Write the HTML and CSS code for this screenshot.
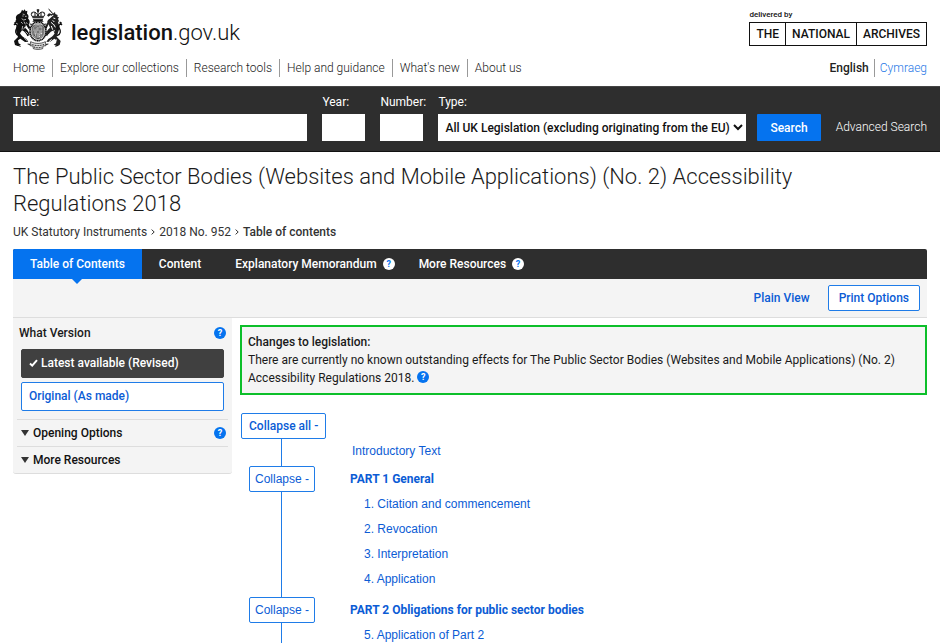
FILE: index.html
```html
<!DOCTYPE html>
<html lang="en">
<head>
  <meta charset="UTF-8">
  <meta name="viewport" content="width=device-width, initial-scale=1.0">
  <title>The Public Sector Bodies (Websites and Mobile Applications) (No. 2) Accessibility Regulations 2018</title>
  <link rel="stylesheet" href="styles.css">
</head>
<body>

  <header class="site-header">
    <div class="brand-row">
      <a class="brand" href="#">
        <svg class="crest" viewBox="0 0 150 126" aria-hidden="true">
          <!-- crown -->
          <g fill="none" stroke="#111" stroke-width="3">
            <path d="M57 25c-6-9 2-15 9-12 4 2 7 5 9 11 2-6 5-9 9-11 7-3 15 3 9 12z"/>
            <path d="M75 3v21M71 6h8M58 29h34M60 34h30M66 13v11M84 13v11"/>
          </g>
          <g fill="#111">
            <circle cx="57" cy="15" r="2"/><circle cx="93" cy="15" r="2"/><circle cx="75" cy="9" r="3"/>
            <path d="M62 36h26l4 5H58z"/>
          </g>
          <!-- garter and shield -->
          <ellipse cx="75" cy="70" rx="24" ry="28" fill="#fff" stroke="#111" stroke-width="5" stroke-dasharray="4 1"/>
          <ellipse cx="75" cy="70" rx="19" ry="23" fill="#ccc" stroke="#222" stroke-width="1.5"/>
          <path d="M60 54h30v20c0 9-8 14-15 18-7-4-15-9-15-18z" fill="#ddd" stroke="#111" stroke-width="2"/>
          <path d="M75 54v38M60 72h30M63 58h9M63 62h8M63 66h9M79 58v10M83 58v10M87 58v10M65 76v8M70 76v11M79 77l7 3M79 82l5 2" fill="none" stroke="#222" stroke-width="2"/>
          <!-- lion -->
          <g fill="#111">
            <path d="M24 13l3-8 4 4 4-5 3 6 5-2-1 9c5 4 6 10 3 14l4 6c2 5 1 9-2 12l5 11-5 3-8-13-3 9c7 6 12 13 14 22l-7 4c-3-8-8-14-16-18l-6 9c4 7 10 13 19 17l6 8-10 1-14-10-7 5 2 9 7 4-10 4-8-3-3-12 12-12-4-11c-3-11-2-20 3-29-8-3-7-9-4-13-3-6-1-14 9-17z"/>
          </g>
          <path d="M29 18l6 2M28 24h4M36 25h5M26 32l6 4 7-2M24 42l5 5M33 41l4 8M40 43l3 5M29 54l-2 11M36 56l-4 8M25 75l7 5M19 96l6 3M38 71l8 8M34 91l8 7" stroke="#fff" stroke-width="2" fill="none"/>
          <path d="M18 83C5 78 7 67 11 61s1-11-4-14l-4 4M4 46l6-4M13 54c7 0 7 9 1 12" fill="none" stroke="#111" stroke-width="4"/>
          <path d="M50 48l6 1M49 57l5 3M14 112l9 3M44 108l10 2" stroke="#111" stroke-width="3"/>
          <!-- unicorn -->
          <path d="M107 2l14 18M108 5l11 11" stroke="#111" stroke-width="2" fill="none"/>
          <path d="M118 19l8-7 1 6 7 3-1 5 5 2-3 5 3 6-3 4c5 10 5 20 0 31l-4 12 12 13-3 12-8 3-10-4 7-4 2-9-7-5-14 10-10-1 6-8c9-4 15-10 19-17l-6-8c-8 4-13 10-16 17l-6-4c2-9 7-16 14-22l-4-10-7 14-6-4 9-15c-1-5 2-9 7-12l8-7-5-3-7 4-4-4 6-6z" fill="#222"/>
          <path d="M116 24l5-2M121 30l6 2M119 37l5 5M114 43l8 7M122 49l5 9M115 54l4 11M124 66l-4 11M109 78l-7 8M116 94l-9 8M131 95l-6 5" stroke="#fff" stroke-width="3" fill="none"/>
          <path d="M132 83c13-5 11-16 7-22s-1-11 4-14l4 4M146 46l-6-4M137 54c-7 0-7 9-1 12" fill="none" stroke="#111" stroke-width="4"/>
          <path d="M100 48l-6 1M102 57l-6 3M136 112l-9 3M106 108l-10 2" stroke="#111" stroke-width="3"/>
          <!-- motto scroll -->
          <path d="M53 101l-2 12 9 1 1 8c9 3 19 3 28 0l1-8 9-1-2-12c-14 7-30 7-44 0z" fill="#ddd" stroke="#111" stroke-width="2"/>
          <path d="M56 109c13 5 25 5 38 0M63 117c9 3 16 3 24 0" fill="none" stroke="#222" stroke-width="3" stroke-dasharray="3 2"/>
        </svg>
        <span class="brand-name"><strong>legislation</strong>.gov.uk</span>
      </a>
      <a class="archives" href="#">
        <span class="archives-by">delivered by</span>
        <span class="archives-logo"><span>THE</span><span>NATIONAL</span><span>ARCHIVES</span></span>
      </a>
    </div>
    <div class="nav-row">
      <nav class="nav" aria-label="Main">
        <a href="#">Home</a>
        <a href="#">Explore our collections</a>
        <a href="#">Research tools</a>
        <a href="#">Help and guidance</a>
        <a href="#">What's new</a>
        <a href="#">About us</a>
      </nav>
      <div class="nav lang">
        <span class="lang-current">English</span>
        <a class="lang-link" href="#">Cymraeg</a>
      </div>
    </div>
  </header>

  <form class="search">
    <div class="field field-title">
      <label for="title">Title:</label>
      <input type="text" id="title" name="title">
    </div>
    <div class="field field-short">
      <label for="year">Year:</label>
      <input type="text" id="year" name="year">
    </div>
    <div class="field field-short">
      <label for="number">Number:</label>
      <input type="text" id="number" name="number">
    </div>
    <div class="search-end">
      <div class="field">
        <label for="type">Type:</label>
        <select id="type" name="type">
          <option>All UK Legislation (excluding originating from the EU)</option>
        </select>
      </div>
      <button type="submit" class="search-btn">Search</button>
    </div>
    <a class="advanced" href="#">Advanced Search</a>
  </form>

  <main class="page">
    <h1>The Public Sector Bodies (Websites and Mobile Applications) (No. 2) Accessibility Regulations 2018</h1>

    <nav class="breadcrumb" aria-label="Breadcrumb">
      <a href="#">UK Statutory Instruments</a>
      <svg class="chevron" viewBox="0 0 4 6" aria-hidden="true"><path d="M.6.6 3.2 3 .6 5.4"/></svg>
      <a href="#">2018 No. 952</a>
      <svg class="chevron" viewBox="0 0 4 6" aria-hidden="true"><path d="M.6.6 3.2 3 .6 5.4"/></svg>
      <strong>Table of contents</strong>
    </nav>

    <nav class="tabs" aria-label="Legislation views">
      <a class="tab active" href="#">Table of Contents</a>
      <a class="tab" href="#">Content</a>
      <a class="tab with-help" href="#">Explanatory Memorandum</a>
      <button type="button" class="help light" aria-label="Help about Explanatory Memorandum">?</button>
      <a class="tab with-help" href="#">More Resources</a>
      <button type="button" class="help light" aria-label="Help about More Resources">?</button>
    </nav>

    <div class="toolbar">
      <a class="plain-view" href="#">Plain View</a>
      <a class="outline-btn" href="#">Print Options</a>
    </div>

    <div class="columns">
      <aside class="sidebar">
        <section class="versions">
          <div class="side-head">
            <h2>What Version</h2>
            <button type="button" class="help" aria-label="Help about What Version">?</button>
          </div>
          <span class="version current">
            <svg class="tick" viewBox="0 0 9 8" aria-hidden="true"><path d="M1 4.5 3.2 6.6 8 1.2"/></svg>
            Latest available (Revised)
          </span>
          <a class="version" href="#">Original (As made)</a>
        </section>
        <section class="side-item">
          <h2><a class="expander" href="#">Opening Options</a></h2>
          <button type="button" class="help" aria-label="Help about Opening Options">?</button>
        </section>
        <section class="side-item">
          <h2><a class="expander" href="#">More Resources</a></h2>
        </section>
      </aside>

      <div class="content">
        <section class="changes">
          <h2>Changes to legislation:</h2>
          <p>There are currently no known outstanding effects for The Public Sector Bodies (Websites and Mobile Applications) (No. 2) Accessibility Regulations 2018. <button type="button" class="help" aria-label="Help about changes to legislation">?</button></p>
        </section>

        <button type="button" class="outline-btn collapse-all">Collapse all -</button>
        <ul class="toc">
          <li class="intro"><a href="#">Introductory Text</a></li>
          <li>
            <div class="part">
              <button type="button" class="outline-btn collapse">Collapse -</button>
              <a href="#">PART 1 General</a>
            </div>
            <ul class="provisions">
              <li><a href="#">1. Citation and commencement</a></li>
              <li><a href="#">2. Revocation</a></li>
              <li><a href="#">3. Interpretation</a></li>
              <li><a href="#">4. Application</a></li>
            </ul>
          </li>
          <li>
            <div class="part">
              <button type="button" class="outline-btn collapse">Collapse -</button>
              <a href="#">PART 2 Obligations for public sector bodies</a>
            </div>
            <ul class="provisions">
              <li><a href="#">5. Application of Part 2</a></li>
            </ul>
          </li>
        </ul>
      </div>
    </div>
  </main>

</body>
</html>
```
FILE: styles.css
```css
* {
  box-sizing: border-box;
}

body {
  margin: 0;
  background: #fff;
  color: #1a1a1a;
  font-family: Roboto, sans-serif;
  font-size: 12px;
  line-height: 18px;
}

h1, h2, p, ul {
  margin: 0;
  padding: 0;
}

ul {
  list-style: none;
}

a {
  color: #0b5cd5;
  text-decoration: none;
}

a:hover {
  text-decoration: underline;
}

button, input, select {
  font: inherit;
  border-radius: 0;
}

button {
  cursor: pointer;
}

/* header */
.site-header {
  padding: 8px 13px 9px;
}

.brand-row, .nav-row {
  display: flex;
  justify-content: space-between;
}

.brand {
  display: flex;
  align-items: center;
  gap: 8px;
  color: #111;
}

.crest {
  width: 50px;
  height: 42px;
}

.brand-name {
  font-size: 22px;
  font-weight: 300;
  line-height: 24px;
  padding-top: 8px;
}

.brand-name strong {
  font-weight: 500;
}

.archives {
  color: #111;
  font-weight: 500;
}

.archives-by {
  display: block;
  font-size: 8px;
  line-height: 14px;
}

.archives-logo {
  display: flex;
  border: 1px solid #111;
}

.archives-logo span {
  padding: 2px 6px;
}

.archives-logo span + span {
  border-left: 1px solid #111;
}

.nav-row {
  margin-top: 9px;
}

.nav {
  display: flex;
  font-weight: 300;
}

.nav > * {
  padding: 0 7px;
  border-left: 1px solid #999;
  color: #222;
}

.nav > :first-child {
  padding-left: 0;
  border-left: 0;
}

.nav > :last-child {
  padding-right: 0;
}

.nav.lang > * {
  padding: 0 5px;
}

.nav.lang > :last-child {
  padding-right: 0;
}

.nav .lang-current {
  font-weight: 500;
}

.nav .lang-link {
  color: #2878e6;
}

/* search */
.search {
  display: flex;
  align-items: flex-end;
  gap: 15px;
  padding: 6px 13px 10px;
  background: #2e2e2e;
  border-top: 1px solid #444;
  border-bottom: 1px solid #111;
  color: #fff;
}

.field label {
  display: block;
  margin-bottom: 3px;
}

.field input, .field select {
  display: block;
  width: 100%;
  height: 27px;
  padding: 0 4px;
  border: 0;
  background: #fff;
  color: #111;
  font-weight: 500;
}

.field select {
  padding: 0 0 0 3px;
}

.field-title {
  flex: 1;
}

.field-short {
  width: 43px;
}

.search-end {
  display: flex;
  align-items: flex-end;
  gap: 11px;
}

.search-btn {
  height: 27px;
  padding: 0 13px;
  border: 0;
  border-radius: 1px;
  background: #0573ef;
  color: #fff;
  font-weight: 500;
}

.advanced {
  color: #fff;
  font-weight: 300;
  line-height: 27px;
}

/* title and breadcrumb */
.page {
  padding: 11px 13px 0;
}

h1 {
  padding-right: 26px;
  font-size: 22px;
  font-weight: 300;
  line-height: 27px;
}

.breadcrumb {
  display: flex;
  align-items: center;
  gap: 4px;
  margin: 6px 0 8px;
}

.breadcrumb a, .breadcrumb strong {
  color: #333;
}

.breadcrumb strong {
  font-weight: 500;
}

.chevron {
  width: 4px;
  height: 6px;
  fill: none;
  stroke: #333;
}

/* tabs */
.tabs {
  display: flex;
  align-items: center;
  background: #2e2e2e;
  border-radius: 2px 2px 0 0;
}

.tab {
  padding: 0 17px;
  color: #fff;
  font-weight: 500;
  line-height: 30px;
}

.tab.with-help {
  padding-right: 6px;
}

.tabs .help {
  margin-right: 7px;
}

.tab.active {
  position: relative;
  background: #0573ef;
  border-radius: 2px 0 0 0;
}

.tab.active::after {
  content: "";
  position: absolute;
  top: 100%;
  left: 50%;
  margin-left: -5px;
  border: 5px solid transparent;
  border-top-color: #0573ef;
  border-bottom: 0;
}

.help {
  width: 12px;
  height: 12px;
  padding: 0;
  border: 0;
  border-radius: 50%;
  background: #0573ef;
  color: #fff;
  font-size: 9px;
  font-weight: 700;
  line-height: 12px;
}

.help.light {
  background: #fff;
  color: #0573ef;
}

.toolbar {
  display: flex;
  justify-content: flex-end;
  align-items: center;
  gap: 18px;
  padding: 6px 7px;
  background: #f4f4f4;
  border-bottom: 1px solid #ddd;
}

.plain-view {
  font-weight: 500;
}

.outline-btn {
  height: 26px;
  padding: 0 10px;
  border: 1px solid #1f7ce8;
  border-radius: 2px;
  background: #fff;
  color: #0b5cd5;
  font-weight: 500;
  line-height: 24px;
}

/* sidebar */
.columns {
  display: flex;
  align-items: flex-start;
  gap: 8px;
}

.sidebar {
  flex: 0 0 219px;
  padding: 0 4px;
  background: #f4f4f4;
  border-bottom: 1px solid #ddd;
  border-radius: 0 0 3px 3px;
}

.sidebar h2, .changes h2 {
  font-size: 12px;
  font-weight: 500;
}

.versions {
  padding: 6px 4px 8px;
}

.side-head, .side-item {
  display: flex;
  justify-content: space-between;
  align-items: center;
}

.side-head {
  margin: 0 -2px 7px;
}

.version {
  display: block;
  padding: 0 7px;
  border: 1px solid #1f7ce8;
  border-radius: 2px;
  background: #fff;
  font-weight: 500;
  line-height: 27px;
}

.version.current {
  margin-bottom: 4px;
  background: #404040;
  border-color: #404040;
  color: #fff;
}

.tick {
  width: 9px;
  height: 8px;
  fill: none;
  stroke: #fff;
  stroke-width: 2;
}

.side-item {
  padding: 4px 2px 4px 4px;
  border-top: 1px solid #ddd;
}

.expander {
  display: flex;
  align-items: center;
  gap: 4px;
  color: #111;
}

.expander::before {
  content: "";
  border: 4px solid transparent;
  border-top: 6px solid #333;
  border-bottom: 0;
}

/* content */
.content {
  flex: 1;
  padding: 7px 0 0;
}

.changes {
  margin-bottom: 18px;
  padding: 6px;
  border: 2px solid #0cbf2a;
  background: #f4f4f4;
}

.changes .help {
  vertical-align: text-top;
}

.collapse-all {
  display: block;
  margin-left: 1px;
  padding: 0 7px;
}

/* the left border is the tree line that joins the collapse buttons */
.toc {
  margin-left: 41px;
  border-left: 1px solid #1f7ce8;
  font-family: "Liberation Sans", Arial, sans-serif;
}

.intro {
  padding: 3px 0 6px 70px;
}

.part {
  display: flex;
  align-items: center;
  gap: 35px;
  margin-left: -33px;
}

.part a {
  font-family: Roboto, sans-serif;
  font-weight: 700;
}

.collapse {
  padding: 0 5px;
  font-weight: 400;
}

.provisions {
  padding: 0 0 5px 82px;
}

.provisions li {
  line-height: 25px;
}

.toc > li:last-child .provisions {
  padding-bottom: 0;
}
```
